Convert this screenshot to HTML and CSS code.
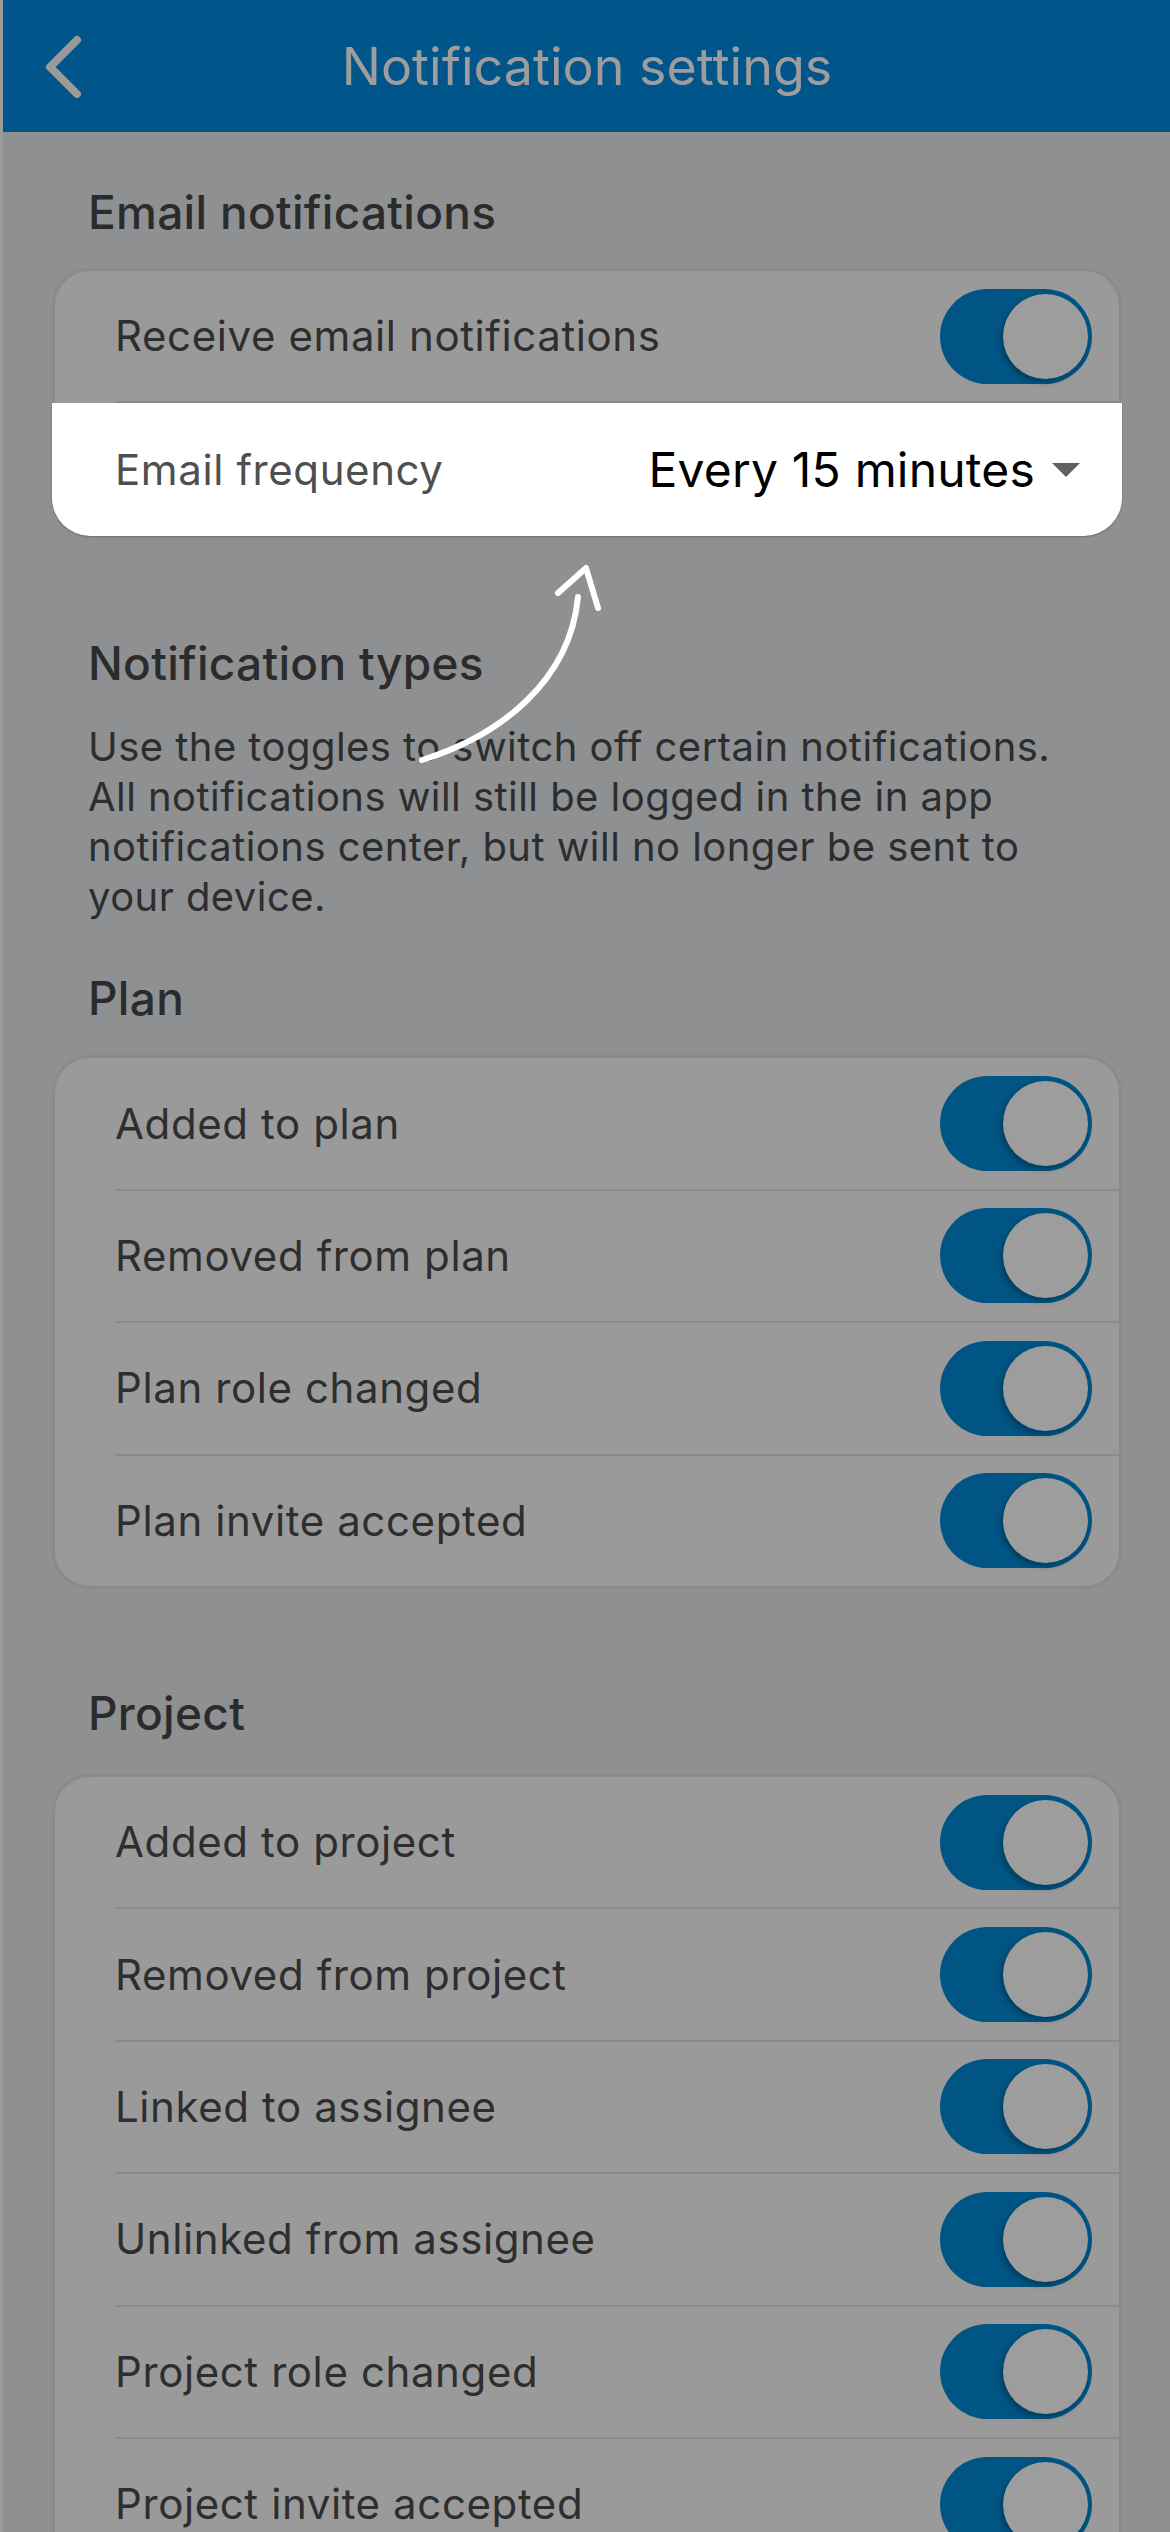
FILE: index.html
```html
<!doctype html>
<html lang="en">
<head>
    <meta http-equiv="Content-Type" content="text/html; charset=utf-8"/>
    <title>Notification settings</title>
    <link rel="stylesheet" href="styles.css">
</head>

<body>

<div class="screen">
    <!--顶部导航-->
    <div class="nav">
        <svg class="back" width="60" height="80" viewBox="30 27 60 80">
            <polyline points="77,40 50,67 77,94" fill="none" stroke="#9a9a9a" stroke-width="8" stroke-linecap="round" stroke-linejoin="round"/>
        </svg>
        <div class="nav-title">Notification settings</div>
    </div>

    <div class="content">
        <h2 class="heading">Email notifications</h2>
        <div class="card">
            <div class="row">
                <div class="row-inner">
                    <span class="label">Receive email notifications</span>
                    <span class="switch"><i></i></span>
                </div>
            </div>
            <div class="row row-spot">
                <div class="row-inner">
                    <span class="label">Email frequency</span>
                    <span class="select">Every 15 minutes<b class="caret"></b></span>
                </div>
            </div>
        </div>

        <h2 class="heading heading-types">Notification types</h2>
        <p class="caption">Use the toggles to switch off certain notifications.<br>All notifications will still be logged in the in app<br>notifications center, but will no longer be sent to<br>your device.</p>

        <h2 class="heading heading-plan">Plan</h2>
        <div class="card">
            <div class="row"><div class="row-inner"><span class="label">Added to plan</span><span class="switch"><i></i></span></div></div>
            <div class="row"><div class="row-inner"><span class="label">Removed from plan</span><span class="switch"><i></i></span></div></div>
            <div class="row"><div class="row-inner"><span class="label">Plan role changed</span><span class="switch"><i></i></span></div></div>
            <div class="row"><div class="row-inner"><span class="label">Plan invite accepted</span><span class="switch"><i></i></span></div></div>
        </div>

        <h2 class="heading heading-project">Project</h2>
        <div class="card">
            <div class="row"><div class="row-inner"><span class="label">Added to project</span><span class="switch"><i></i></span></div></div>
            <div class="row"><div class="row-inner"><span class="label">Removed from project</span><span class="switch"><i></i></span></div></div>
            <div class="row"><div class="row-inner"><span class="label">Linked to assignee</span><span class="switch"><i></i></span></div></div>
            <div class="row"><div class="row-inner"><span class="label">Unlinked from assignee</span><span class="switch"><i></i></span></div></div>
            <div class="row"><div class="row-inner"><span class="label">Project role changed</span><span class="switch"><i></i></span></div></div>
            <div class="row"><div class="row-inner"><span class="label">Project invite accepted</span><span class="switch"><i></i></span></div></div>
        </div>
    </div>
</div>

<!--引导箭头-->
<svg class="hint-arrow" width="200" height="215" viewBox="410 555 200 215">
    <path d="M422 760 C 500 736, 570 681, 578 597" fill="none" stroke="#fff" stroke-width="6" stroke-linecap="round"/>
    <polyline points="558,593 586,568 598,608" fill="none" stroke="#fff" stroke-width="6" stroke-linecap="round" stroke-linejoin="round"/>
</svg>

</body>
</html>
```

FILE: styles.css
```css
* {
    padding: 0;
    margin: 0;
    box-sizing: border-box;
}
html, body {
    background: #9b9b9b;
}
body {
    font-family: "Inter", "Roboto", sans-serif;
    color: #2d2d2e;
    overflow: hidden;
}
.screen {
    margin-left: 3px;
    min-height: 2532px;
    background: #8f9092;
}
.nav {
    height: 132px;
    background: #00568a;
    display: flex;
    align-items: center;
    justify-content: center;
    position: relative;
}
.back {
    position: absolute;
    left: 27px;
    top: 27px;
}
.nav-title {
    font-size: 52px;
    line-height: 60px;
    color: #9d9d9d;
    margin-left: 1px;
    margin-top: 2px;
}
.content {
    padding: 54px 48px 0 49px;
}
.heading {
    font-size: 46px;
    line-height: 52px;
    font-weight: 500;
    letter-spacing: 0.3px;
    color: #2b2b2c;
    padding-left: 36px;
    margin-bottom: 30px;
}
.heading-types {
    margin-top: 101px;
    margin-bottom: 33px;
}
.heading-plan {
    margin-top: 50px;
    margin-bottom: 31px;
}
.heading-project {
    margin-top: 98px;
    margin-bottom: 35px;
}
.caption {
    font-size: 40px;
    line-height: 50px;
    letter-spacing: 0.45px;
    color: #2d2d2e;
    padding-left: 36px;
    white-space: nowrap;
}
.card {
    background: #9a9a9a;
    border: 3px solid #8a8a8a;
    border-radius: 38px;
}
.row {
    padding-left: 60px;
}
.row-inner {
    min-height: 132.4px;
    display: flex;
    align-items: center;
    justify-content: space-between;
    padding-right: 27px;
    border-bottom: 2px solid #8b8b8b;
}
.row:last-child .row-inner {
    min-height: 130.4px;
    border-bottom: 0;
}
.label {
    font-size: 42px;
    line-height: 48px;
    letter-spacing: 0.6px;
    color: #2e2e2e;
}
.switch {
    width: 152px;
    height: 95px;
    border-radius: 48px;
    background: #005584;
    position: relative;
}
.switch i {
    position: absolute;
    right: 4px;
    top: 5px;
    width: 85px;
    height: 85px;
    border-radius: 50%;
    background: #9d9d9d;
    box-shadow: -2px 3px 6px rgba(0, 0, 0, 0.3);
}
/* 高亮的一行 */
.row-spot {
    background: #fff;
    margin: 0 -3px -3px -3px;
    padding-left: 63px;
    border-radius: 0 0 38px 38px;
    box-shadow: 0 1px 2px rgba(0, 0, 0, 0.25);
}
.row-spot .row-inner,
.row-spot:last-child .row-inner {
    min-height: 133px;
    padding-right: 42px;
}
.row-spot .label {
    color: #4f4f50;
}
.select {
    display: flex;
    align-items: center;
    font-size: 48px;
    line-height: 56px;
    letter-spacing: 0.2px;
    color: #000;
}
.caret {
    width: 0;
    height: 0;
    margin-left: 17px;
    border-left: 14px solid transparent;
    border-right: 14px solid transparent;
    border-top: 14px solid #606060;
}
.hint-arrow {
    position: absolute;
    left: 410px;
    top: 555px;
}
```
